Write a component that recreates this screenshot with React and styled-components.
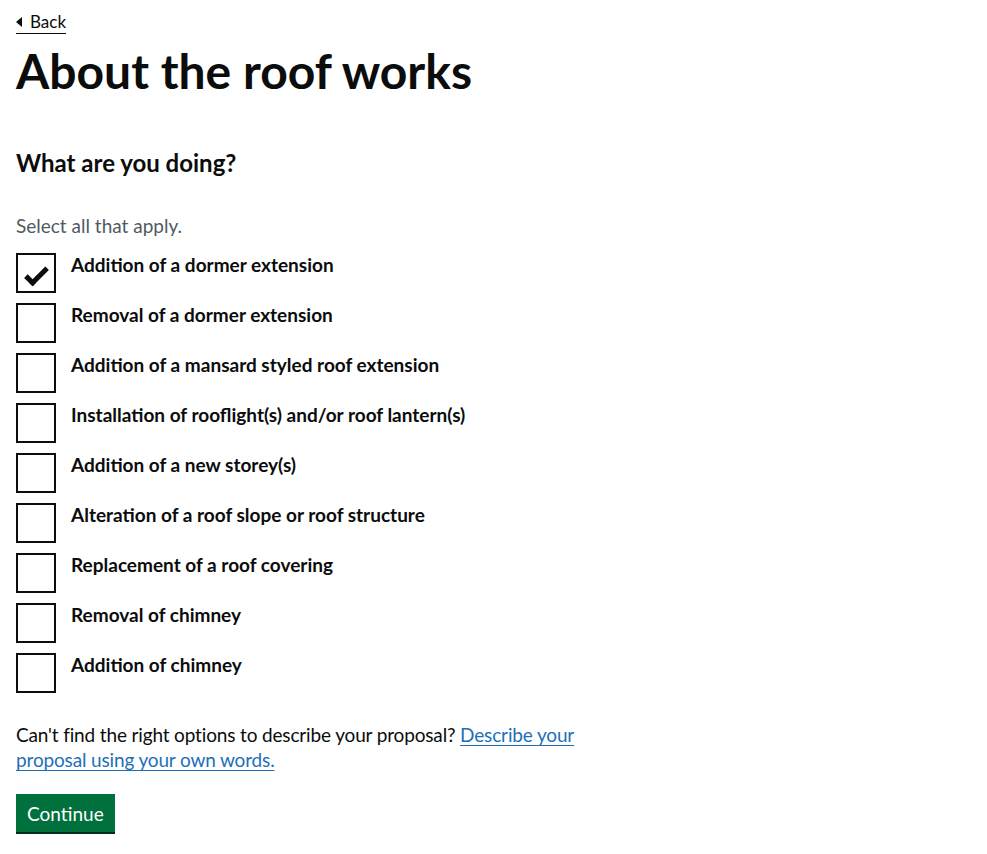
import React from "react";
import styled, { createGlobalStyle } from "styled-components";

const Global = createGlobalStyle`
  html, body { margin: 0; padding: 0; background: #ffffff; }
  body {
    font-family: Lato, "Noto Sans", Arial, sans-serif;
    color: #0b0c0c;
    -webkit-font-smoothing: antialiased;
  }
`;

const Page = styled.main`
  display: flex;
  flex-direction: column;
  align-items: flex-start;
  padding: 0 16px 20px;
`;

const BackLink = styled.a`
  display: inline-flex;
  align-items: center;
  gap: 8px;
  margin-top: 12px;
  padding-bottom: 1px;
  font-size: 17px;
  line-height: 20px;
  color: #0b0c0c;
  text-decoration: none;
  border-bottom: 1px solid #0b0c0c;
  cursor: pointer;
`;

const Title = styled.h1`
  margin: 12px 0 0;
  font-size: 48px;
  line-height: 50px;
  font-weight: 700;
`;

const Fieldset = styled.fieldset`
  margin: 52px 0 0;
  padding: 0;
  border: 0;
  display: flex;
  flex-direction: column;
`;

const Legend = styled.h2`
  margin: 0;
  font-size: 24px;
  line-height: 30px;
  font-weight: 700;
`;

const Hint = styled.div`
  margin-top: 35px;
  font-size: 19px;
  line-height: 25px;
  color: #505a5f;
`;

const List = styled.div`
  margin-top: 15px;
  display: flex;
  flex-direction: column;
  gap: 10px;
`;

const Item = styled.label`
  display: flex;
  align-items: flex-start;
  gap: 15px;
  cursor: pointer;
`;

const Box = styled.span`
  position: relative;
  flex: none;
  width: 40px;
  height: 40px;
  box-sizing: border-box;
  border: 2px solid #0b0c0c;
  background: #fff;

  &::after {
    content: "";
    display: ${(p) => (p.$checked ? "block" : "none")};
    position: absolute;
    top: 13px;
    left: 7px;
    width: 18px;
    height: 7px;
    border: solid #0b0c0c;
    border-width: 0 0 5px 5px;
    transform: rotate(-45deg);
  }
`;

const LabelText = styled.span`
  font-size: 19px;
  line-height: 22px;
  font-weight: 700;
  padding-top: 1px;
`;

const Para = styled.p`
  margin: 29px 0 0;
  max-width: 620px;
  font-size: 19px;
  line-height: 25px;
  letter-spacing: -0.15px;
`;

const Link = styled.a`
  color: #1d70b8;
  text-decoration: underline;
  text-decoration-thickness: 1px;
  text-underline-offset: 3px;
  cursor: pointer;
`;

const Button = styled.button`
  margin-top: 22px;
  padding: 8px 9px 7px;
  border: 2px solid transparent;
  border-radius: 0;
  background: #00703c;
  box-shadow: 0 2px 0 #002d18;
  color: #ffffff;
  font-family: inherit;
  font-size: 19px;
  line-height: 19px;
  cursor: pointer;
`;

const options = [
  { label: "Addition of a dormer extension", checked: true },
  { label: "Removal of a dormer extension" },
  { label: "Addition of a mansard styled roof extension" },
  { label: "Installation of rooflight(s) and/or roof lantern(s)" },
  { label: "Addition of a new storey(s)" },
  { label: "Alteration of a roof slope or roof structure" },
  { label: "Replacement of a roof covering" },
  { label: "Removal of chimney" },
  { label: "Addition of chimney" },
];

export default function App() {
  return (
    <>
      <Global />
      <Page>
        <BackLink>
          <svg width="6" height="10" viewBox="0 0 6 10" aria-hidden="true">
            <polygon points="0,5 6,0 6,10" fill="#0b0c0c" />
          </svg>
          Back
        </BackLink>
        <Title>About the roof works</Title>
        <Fieldset>
          <Legend>What are you doing?</Legend>
          <Hint>Select all that apply.</Hint>
          <List>
            {options.map((o) => (
              <Item key={o.label}>
                <Box $checked={o.checked} />
                <LabelText>{o.label}</LabelText>
              </Item>
            ))}
          </List>
        </Fieldset>
        <Para>
          Can't find the right options to describe your proposal?{" "}
          <Link>Describe your proposal using your own words.</Link>
        </Para>
        <Button>Continue</Button>
      </Page>
    </>
  );
}
